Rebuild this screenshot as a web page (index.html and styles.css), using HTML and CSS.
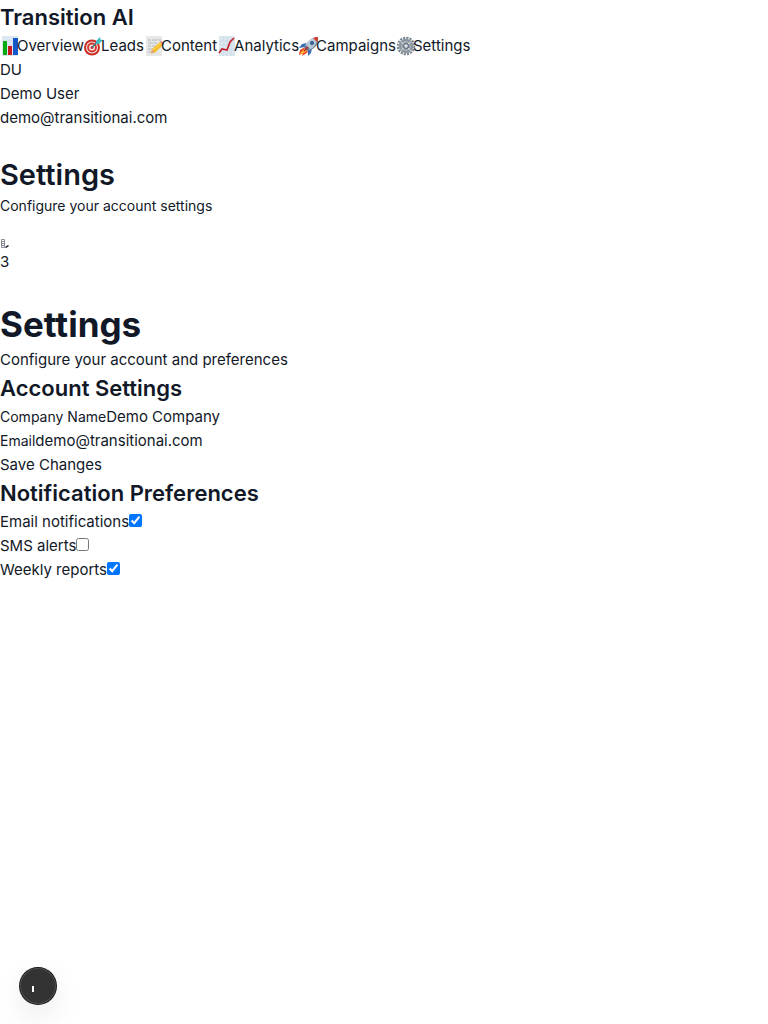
FILE: index.html
```html
<!DOCTYPE html>
<html lang="en">
<head>
<meta charset="utf-8">
<meta name="viewport" content="width=device-width, initial-scale=1">
<title>Settings - Transition AI</title>
<link rel="stylesheet" href="styles.css">
</head>
<body>
<aside>
  <h2 class="title">Transition AI</h2>
  <nav class="nav">
    <a href="#overview"><svg class="icon" viewBox="0 0 20 20" aria-hidden="true"><path fill="#dce8f1" d="M2 0h16v20H2z"/><path stroke="#c5d4e0" stroke-width=".5" d="M2 5h16M2 9h16M2 13h16"/><path fill="#0caa12" d="M3 5h4v14H3z"/><path fill="#c71920" d="M8 10h4v9H8z"/><path fill="#1457c8" d="M13 2h5v17h-5z"/></svg>Overview</a>
    <a href="#leads"><svg class="icon" viewBox="0 0 20 20" aria-hidden="true"><circle cx="8" cy="11.500" r="8" fill="#c92d25"/><circle cx="8" cy="11.500" r="6" fill="#f5e8e4"/><circle cx="8" cy="11.500" r="4.900" fill="#d5352c"/><circle cx="8" cy="11.500" r="3" fill="#f5e8e4"/><circle cx="8" cy="11.500" r="1.500" fill="#c92d25"/><path d="m8 11.500 7-7" stroke="#347a86" stroke-width="1.400"/><path fill="#43b9c5" d="m12 5 4-4 .5 2.500 2.500.5-4 4-3-.2z"/></svg>Leads</a>
    <a href="#content"><svg class="icon" viewBox="0 0 20 20" aria-hidden="true"><path fill="#e6e7e7" d="M2 0h16v20H2z"/><path d="M4 4h3m1 0h5m1 0h3M4 7h5m1 0h3M4 10h3m1 0h4M4 13h4M4 16h3" stroke="#b5b7b9" stroke-width="1"/><path fill="#f5bd28" d="m8 13 8-7 3 3-8 7.500-4 1z"/><path d="m9 14 8-7" stroke="#ffdf65"/><path fill="#e2a97d" d="m8 13 3 3.500-4 1z"/><path fill="#de7165" d="m16 6 1.500-1 2.500 3-1 1z"/></svg>Content</a>
    <a href="#analytics"><svg class="icon" viewBox="0 0 20 20" aria-hidden="true"><path fill="#dbe7ef" d="M2 0h16v20H2z"/><path d="M2 5h16M2 9h16M2 13h16M6 0v20M10 0v20M14 0v20" stroke="#c4d3df" stroke-width=".5"/><path d="m2 17 3-4 5 1 3-8 4-4" fill="none" stroke="#c62129" stroke-width="1.700"/></svg>Analytics</a>
    <a href="#campaigns"><svg class="icon" viewBox="0 0 20 20" aria-hidden="true"><path fill="#ee3d20" d="m6 11-5 3-1 5 4-2-1 3 6-4z"/><path fill="#ffb52b" d="m6 12-4 4-1 3 7-4z"/><path fill="#376bb2" d="m8 7-5 1-3 4 6-1zm5 5-1 5-3 3 0-6z"/><path fill="#b5c7d8" d="M5 12C8 5 12 1 19 1c0 7-4 11-11 14z"/><path fill="#66788c" d="m8 15-3-3 2-3 4 4zm1 0c6-3 9-7 10-14 1 7-3 12-10 14"/><path fill="#d63b32" d="M14 2c2-1 3-1 5-1 0 2 0 3-1 5z"/><circle cx="13" cy="7" r="2" fill="#315c91"/><path d="m5 15 4-4" stroke="#b92924" stroke-width="1.500"/></svg>Campaigns</a>
    <a href="#settings"><svg class="icon" viewBox="0 0 20 20" aria-hidden="true"><circle cx="10" cy="10" r="8.300" fill="none" stroke="#78858f" stroke-width="2" stroke-dasharray="2.200 1.060"/><circle cx="10" cy="10" r="6" fill="#b5bfc7" stroke="#8a959e" stroke-width="2.500"/><circle cx="10" cy="10" r="3.600" fill="#6c7985"/><circle cx="10" cy="10" r="1.800" fill="#dce3e8"/><path d="m5 6 3 2m4 4 3 3m0-9-3 2m-4 4-3 2" stroke="#d2d9dd"/></svg>Settings</a>
  </nav>
  <div>DU</div>
  <div>Demo User</div>
  <div>demo@transitionai.com</div>
</aside>
<main>
  <header class="topbar">
    <h1 class="page-title">Settings</h1>
    <p class="small intro">Configure your account settings</p>
    <div class="alerts">
      <svg class="alert-icon" viewBox="0 0 9 9" role="img" aria-label="Notifications"><path d="M1.500.5h3v8h-3zM1.500 2.500h3M1.500 4.500h3M1.500 6.500h3" fill="none" stroke="#5b6270" stroke-width=".7"/><path d="m5.500 8.500 3-2" stroke="#111827" stroke-width="1.500"/></svg>
      <div>3</div>
    </div>
  </header>
  <h1 class="hero">Settings</h1>
  <p>Configure your account and preferences</p>
  <section>
    <h2 class="title">Account Settings</h2>
    <div class="row"><label class="small" for="company">Company Name</label><input class="field" id="company" type="text" value="Demo Company"></div>
    <div class="row"><label class="small" for="email">Email</label><input class="field" id="email" type="email" value="demo@transitionai.com"></div>
    <button class="save" type="button">Save Changes</button>
  </section>
  <section>
    <h2 class="title">Notification Preferences</h2>
    <div class="row"><label for="mail">Email notifications</label><input class="check" id="mail" type="checkbox" checked></div>
    <div class="row"><label for="sms">SMS alerts</label><input class="check" id="sms" type="checkbox"></div>
    <div class="row"><label for="weekly">Weekly reports</label><input class="check" id="weekly" type="checkbox" checked></div>
  </section>
</main>
<button class="launcher" type="button" aria-label="Open tools"><svg viewBox="0 0 36 36" aria-hidden="true"><path fill="#fff" d="M12 18h2v6h-2z"/></svg></button>
</body>
</html>
```
FILE: styles.css
```css
* { box-sizing: border-box; margin: 0; padding: 0; }
body {
  padding-top: 1px;
  background: #fff;
  color: #111827;
  font: 15px/24px Inter, "Liberation Sans", sans-serif;
}
button, input { font: inherit; color: inherit; border: 0; background: none; }
a { color: inherit; text-decoration: none; }
.title { font-size: 22px; line-height: 33px; font-weight: 600; }
.nav { display: flex; }
.nav a { display: flex; align-items: center; }
.icon { width: 20px; height: 20px; margin-right: -3px; flex: none; }
.topbar { padding: 24px 0; }
.page-title { font-size: 29px; line-height: 42px; font-weight: 600; }
.small { font-size: 14px; }
.intro { line-height: 20px; }
.alerts { padding-top: 20px; }
.alert-icon { display: block; width: 9px; height: 9px; margin: 3px 0 2px; }
.hero { padding-top: 2px; font-size: 35px; line-height: 48px; font-weight: 700; }
.row { display: flex; align-items: baseline; height: 24px; }
.field { flex: 1; min-width: 0; height: 24px; }
.save { display: block; height: 24px; }
.check { width: 13px; height: 13px; }
.launcher {
  position: fixed;
  left: 20px;
  bottom: 20px;
  width: 36px;
  height: 36px;
  border-radius: 50%;
  background: #333;
  box-shadow: inset 0 0 0 1px #4d4d4d, 0 0 0 1px #171717, 0 12px 32px -4px #00000026;
}
.launcher svg { display: block; width: 36px; height: 36px; }
```
